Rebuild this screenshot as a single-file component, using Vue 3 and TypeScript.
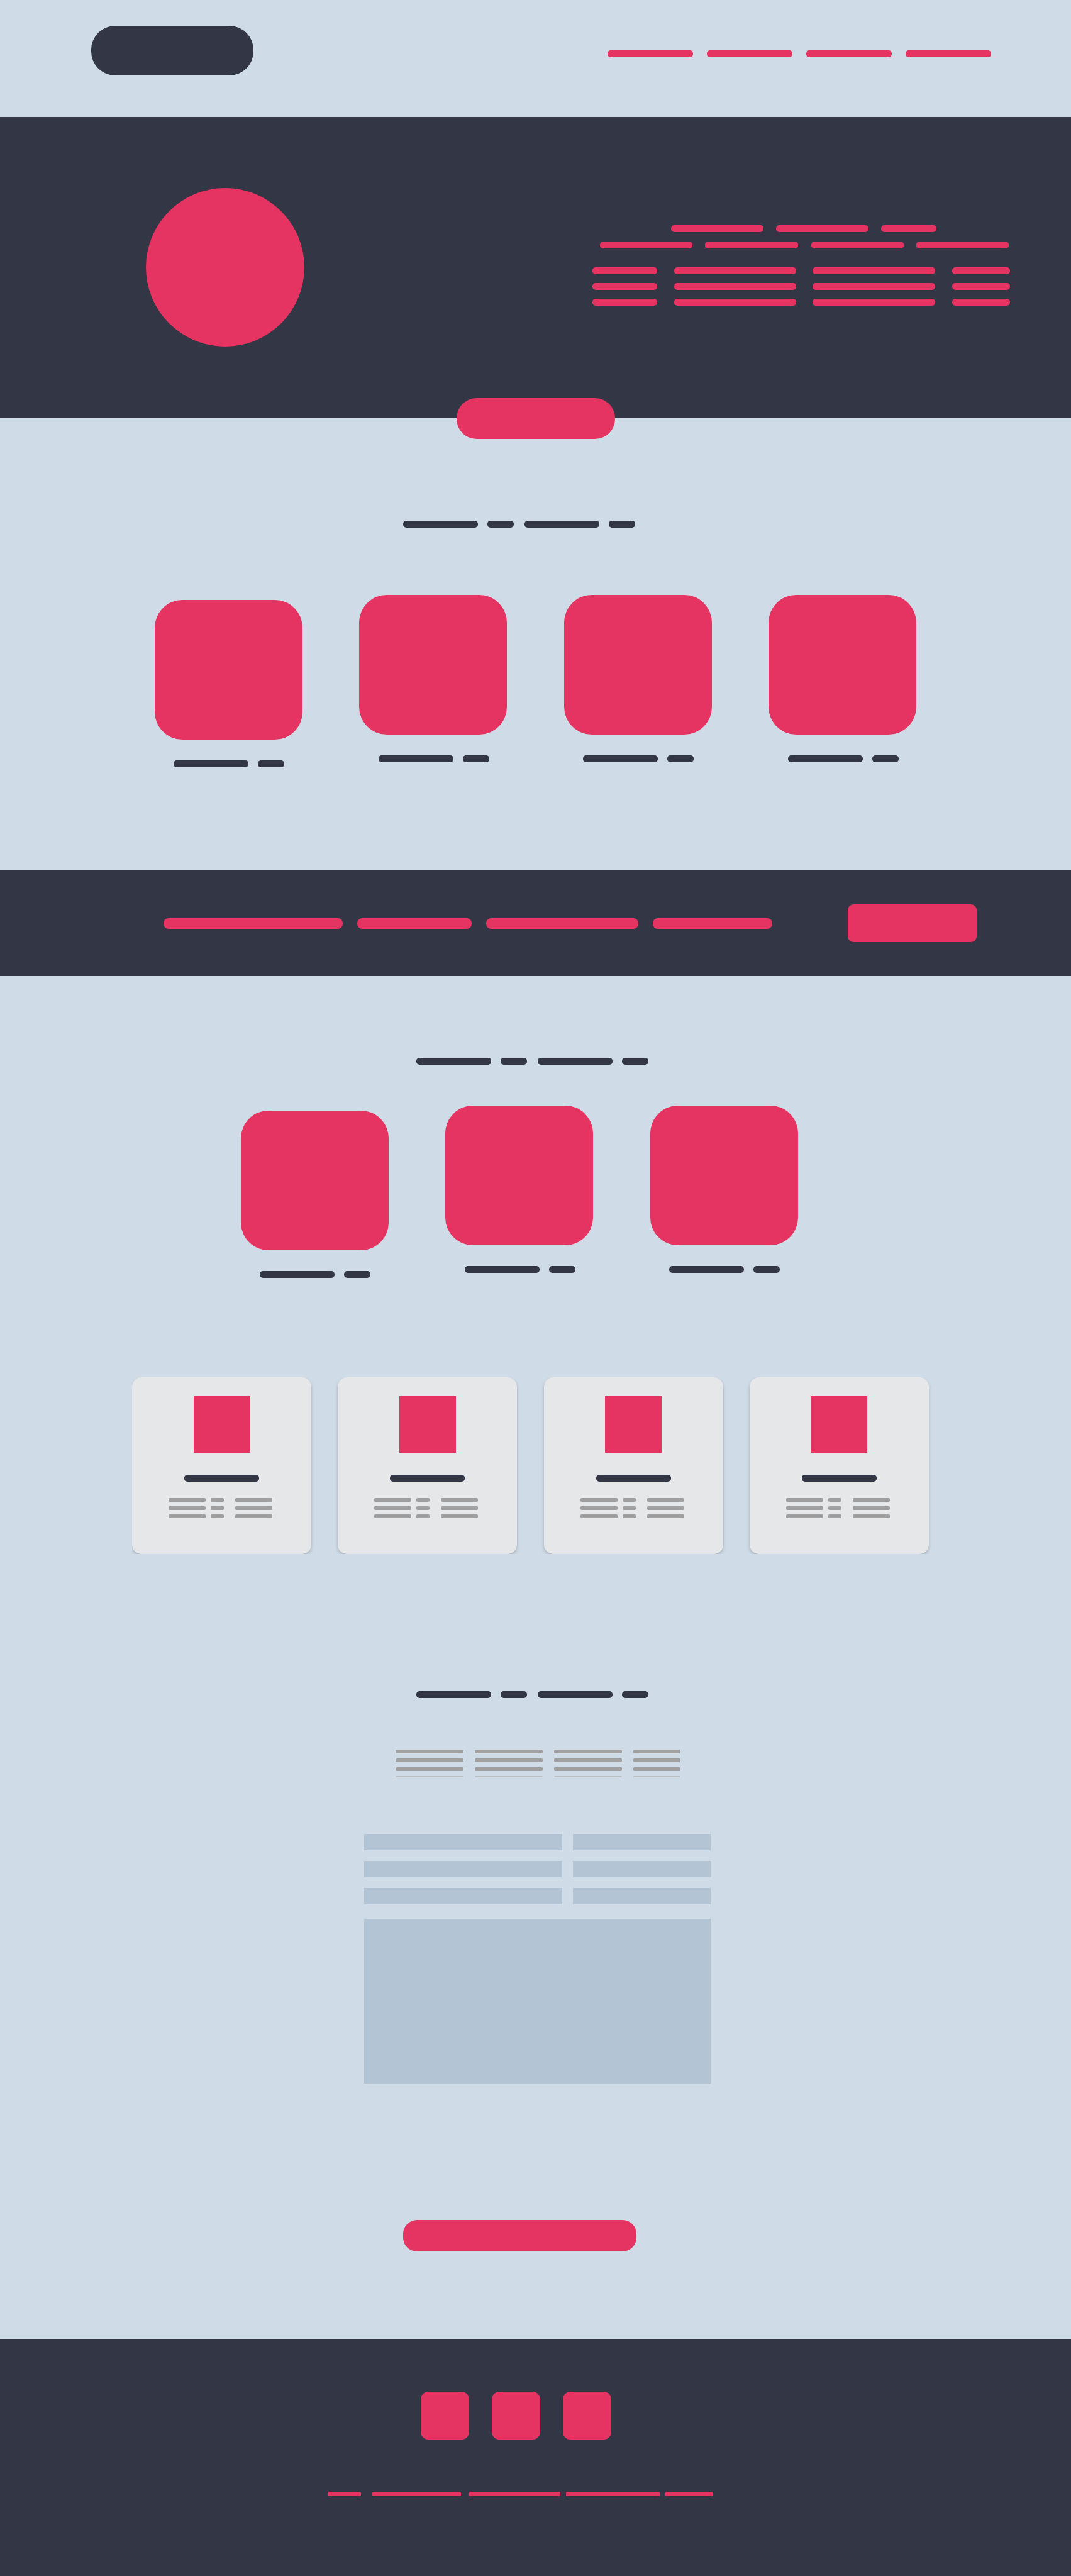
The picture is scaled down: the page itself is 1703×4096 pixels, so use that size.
<script setup lang="ts">
// Each bar is [width, gap after it]
type Bar = [number, number]

const bar = ([width, gap]: Bar) => ({ width: `${width}px`, marginRight: `${gap}px` })

const navItems = ['Home', 'About', 'Services', 'Contact']
const heroTitle: Bar[][] = [
  [[147, 20], [147, 20], [88, 2]],
  [[147, 20], [148, 21], [147, 20], [147, 0]],
]
const heroText: Bar[] = [[103, 27], [194, 26], [195, 27], [92, 0]]
const heading: Bar[] = [[119, 15], [42, 17], [119, 15], [42, 0]]
const caption: Bar[] = [[119, 15], [42, 0]]
const promo: Bar[] = [[285, 23], [182, 23], [242, 23], [190, 0]]
const cardText: Bar[] = [[59, 8], [21, 18], [59, 0]]
const contactText: Bar[] = [[108, 18], [108, 18], [108, 18], [74, 0]]
const footerText: Bar[] = [[52, 18], [141, 13], [145, 9], [149, 9], [75, 0]]
const fields = ['First name', 'Title', 'Last name', 'Phone', 'Email', 'Company']
const socials = ['Facebook', 'Twitter', 'Instagram']
</script>

<template>
  <div class="page">
    <header class="header">
      <a class="logo" href="#" aria-label="Home page"></a>
      <nav class="nav">
        <a v-for="item in navItems" :key="item" class="bar nav-link" href="#" :aria-label="item"></a>
      </nav>
    </header>

    <section class="hero">
      <div class="portrait"></div>
      <div class="hero-copy">
        <h1 class="hero-title">
          <span v-for="(row, r) in heroTitle" :key="r" class="line">
            <span v-for="(b, i) in row" :key="i" class="bar" :style="bar(b)"></span>
          </span>
        </h1>
        <div class="hero-text">
          <div v-for="r in 3" :key="r" class="line">
            <span v-for="(b, i) in heroText" :key="i" class="bar" :style="bar(b)"></span>
          </div>
        </div>
      </div>
    </section>
    <button class="cta" type="button" aria-label="Get started"></button>

    <section class="services">
      <h2 class="line heading shifted">
        <span v-for="(b, i) in heading" :key="i" class="bar dark" :style="bar(b)"></span>
      </h2>
      <div class="tiles four">
        <figure v-for="n in 4" :key="n" class="tile">
          <div class="tile-image"></div>
          <figcaption class="line">
            <span v-for="(b, i) in caption" :key="i" class="bar dark" :style="bar(b)"></span>
          </figcaption>
        </figure>
      </div>
    </section>

    <section class="promo">
      <div class="line">
        <span v-for="(b, i) in promo" :key="i" class="bar thick" :style="bar(b)"></span>
      </div>
      <button class="promo-button" type="button" aria-label="Learn more"></button>
    </section>

    <section class="team">
      <h2 class="line heading">
        <span v-for="(b, i) in heading" :key="i" class="bar dark" :style="bar(b)"></span>
      </h2>
      <div class="shifted">
        <div class="tiles three">
          <figure v-for="n in 3" :key="n" class="tile">
            <div class="tile-image"></div>
            <figcaption class="line">
              <span v-for="(b, i) in caption" :key="i" class="bar dark" :style="bar(b)"></span>
            </figcaption>
          </figure>
        </div>
      </div>
    </section>

    <section class="cards-section">
      <div class="cards">
        <article v-for="n in 4" :key="n" class="card">
          <div class="card-image"></div>
          <h3 class="bar dark card-title"></h3>
          <div class="card-text">
            <div v-for="r in 3" :key="r" class="line">
              <span v-for="(b, i) in cardText" :key="i" class="bar thin" :style="bar(b)"></span>
            </div>
          </div>
        </article>
      </div>
    </section>

    <section class="contact">
      <h2 class="line heading">
        <span v-for="(b, i) in heading" :key="i" class="bar dark" :style="bar(b)"></span>
      </h2>
      <div class="contact-text">
        <div v-for="r in 4" :key="r" class="line">
          <span v-for="(b, i) in contactText" :key="i" class="bar thin" :style="bar(b)"></span>
        </div>
      </div>
      <form class="form" @submit.prevent>
        <div class="fields">
          <input v-for="f in fields" :key="f" class="field" type="text" :aria-label="f" />
        </div>
        <textarea class="field message" aria-label="Message"></textarea>
        <button class="submit" type="submit" aria-label="Send message"></button>
      </form>
    </section>

    <footer class="footer">
      <div class="socials">
        <a v-for="s in socials" :key="s" class="social" href="#" :aria-label="s"></a>
      </div>
      <div class="line footer-text">
        <span v-for="(b, i) in footerText" :key="i" class="bar footer-bar" :style="bar(b)"></span>
      </div>
    </footer>
  </div>
</template>

<style>
body {
  margin: 0;
  background: #cfdbe6;
}
</style>

<style scoped>
.page {
  --pink: #e63462;
  --dark: #333745;
  --field: #b3c4d4;
  background: #cfdbe6;
  font-family: "Liberation Sans", Arial, sans-serif;
}
.page * {
  box-sizing: border-box;
}
h1,
h2,
h3,
figure {
  margin: 0;
}
button,
input,
textarea {
  display: block;
  padding: 0;
  border: 0;
  background: var(--pink);
}

/* Placeholder bars */
.line {
  display: flex;
  justify-content: center;
}
.bar {
  flex: none;
  display: block;
  height: 11px;
  border-radius: 5px;
  background: var(--pink);
}
.bar.dark {
  background: var(--dark);
}
.bar.thick {
  height: 17px;
  border-radius: 8px;
}
.bar.thin {
  height: 6px;
  border-radius: 2px;
  background: #a0a0a0;
}
.heading {
  padding-right: 10px;
}
.shifted {
  padding-right: 52px;
}

.header {
  display: flex;
  justify-content: space-between;
  align-items: center;
  padding: 41px 127px 66px 145px;
}
.logo {
  width: 258px;
  height: 79px;
  border-radius: 38px;
  background: var(--dark);
}
.nav {
  display: flex;
  gap: 22px;
  padding-top: 10px;
}
.nav-link {
  width: 136px;
}

.hero {
  display: flex;
  justify-content: space-between;
  align-items: center;
  padding: 113px 97px 114px 232px;
  background: var(--dark);
}
.portrait {
  width: 252px;
  height: 252px;
  border-radius: 50%;
  background: var(--pink);
}
.hero-copy {
  display: flex;
  flex-direction: column;
  gap: 30px;
  padding-bottom: 6px;
}
.hero-title {
  display: flex;
  flex-direction: column;
  gap: 15px;
  padding-left: 10px;
}
.hero-text {
  display: flex;
  flex-direction: column;
  gap: 14px;
}
.cta {
  position: relative;
  width: 252px;
  height: 65px;
  margin: -32px auto 0;
  border-radius: 32px;
}

.services {
  padding: 130px 0 164px;
}
.tiles {
  display: flex;
  justify-content: space-between;
  margin: 0 auto;
}
.tiles.four {
  max-width: 1212px;
  margin-top: 107px;
}
.tiles.three {
  max-width: 886px;
  margin-top: 65px;
}
.tile:first-child {
  margin-top: 8px;
}
.tile-image {
  width: 235px;
  height: 222px;
  margin-bottom: 33px;
  border-radius: 44px;
  background: var(--pink);
}
.tile .line {
  padding-left: 2px;
}

.promo {
  display: flex;
  justify-content: space-between;
  align-items: center;
  padding: 54px 150px 54px 260px;
  background: var(--dark);
}
.promo-button {
  width: 205px;
  height: 60px;
  border-radius: 9px;
}

.team {
  padding: 130px 0 158px;
}

.cards-section {
  padding-right: 16px;
}
.cards {
  display: flex;
  justify-content: space-between;
  max-width: 1267px;
  margin: 0 auto;
  clip-path: inset(0 -8px 0 0);
}
.card {
  display: flex;
  flex-direction: column;
  align-items: center;
  width: 285px;
  padding: 30px 0 57px;
  border-radius: 15px;
  background: #e5e7e9;
  box-shadow: 0 3px 5px rgba(51, 55, 69, 0.25);
}
.card-image {
  width: 90px;
  height: 90px;
  background: var(--pink);
}
.card-title {
  width: 119px;
  margin: 35px 0 26px;
}
.card-text {
  display: flex;
  flex-direction: column;
  gap: 7px;
  padding-right: 4px;
}

.contact {
  padding: 218px 0 139px;
}
.contact-text {
  display: flex;
  flex-direction: column;
  gap: 8px;
  height: 44px;
  margin: 82px 0 90px;
  padding-left: 6px;
  overflow: hidden;
}
.contact-text .line:last-child {
  opacity: 0.5;
}
.contact-text .bar:last-child {
  border-radius: 2px 0 0 2px;
}
.form {
  display: flex;
  flex-direction: column;
  align-items: center;
  padding-left: 6px;
}
.fields {
  display: grid;
  grid-template-columns: 315px 219px;
  gap: 17px;
}
.field {
  height: 26px;
  border-radius: 0;
  background: var(--field);
}
.message {
  width: 551px;
  height: 262px;
  margin: 23px 0 217px;
  resize: none;
}
.submit {
  width: 371px;
  height: 50px;
  margin-right: 56px;
  border-radius: 22px;
}

.footer {
  padding: 84px 0 127px;
  background: var(--dark);
}
.socials {
  display: flex;
  justify-content: center;
  gap: 36px;
  padding-right: 63px;
  margin-bottom: 83px;
}
.social {
  width: 77px;
  height: 76px;
  border-radius: 12px;
  background: var(--pink);
}
.footer-text {
  padding-right: 49px;
}
.footer-bar {
  height: 7px;
  border-radius: 2px;
}
.footer-bar:first-child {
  border-radius: 0 2px 2px 0;
}
.footer-bar:last-child {
  border-radius: 2px 0 0 2px;
}
</style>
